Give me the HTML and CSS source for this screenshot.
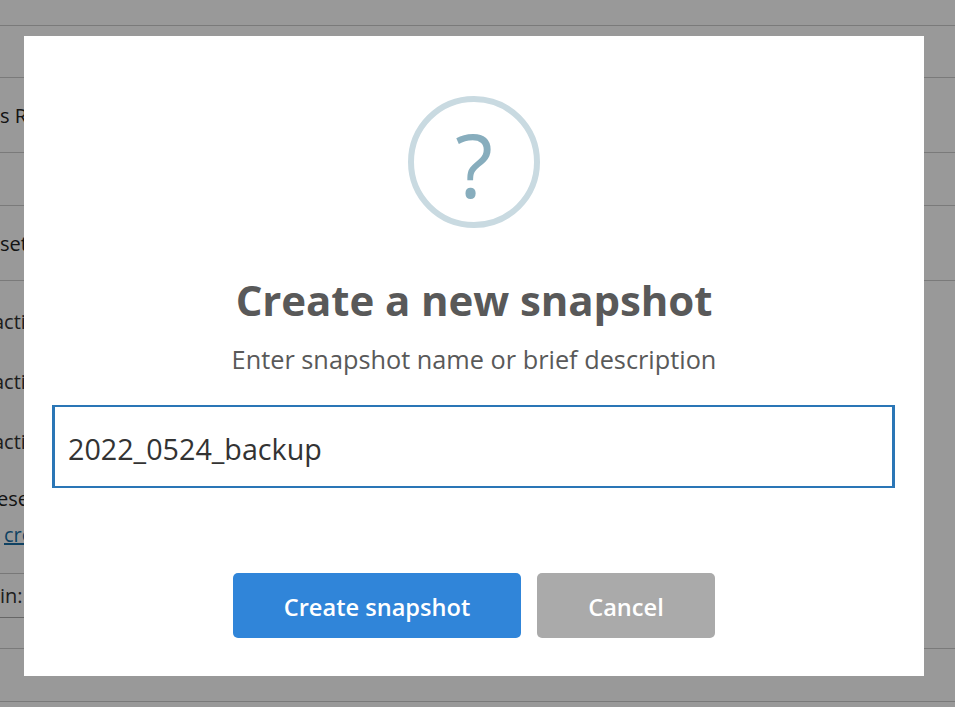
FILE: index.html
```html
<!DOCTYPE html>
<html lang="en">
<head>
<meta charset="utf-8">
<title>Create a new snapshot</title>
<link rel="stylesheet" href="styles.css">
</head>
<body>
<main class="page">
  <div class="row h25"></div>
  <div class="row h52"></div>
  <div class="row h75 text-row"><span class="strong">s R</span></div>
  <div class="row h53"></div>
  <div class="row h75 text-row"><span class="strong">set</span></div>
  <div class="plain">
    <p class="item i1">acti</p>
    <p class="item i2">acti</p>
    <p class="item i3">acti</p>
    <p class="item i4 strong">eset</p>
    <p class="item i5"><a href="#" class="link">cre</a></p>
  </div>
  <div class="row h44 text-row short"><span>in:</span></div>
  <div class="row h31"></div>
  <div class="row h53"></div>
</main>
<div class="overlay">
  <section class="modal">
    <div class="icon">?</div>
    <h1 class="title">Create a new snapshot</h1>
    <p class="subtitle">Enter snapshot name or brief description</p>
    <input class="name" type="text" value="2022_0524_backup">
    <div class="actions">
      <button class="btn confirm" type="button">Create snapshot</button>
      <button class="btn cancel" type="button">Cancel</button>
    </div>
  </section>
</div>
</body>
</html>
```
FILE: styles.css
```css
* { box-sizing: border-box; }
html, body { margin: 0; height: 100%; overflow: hidden; }
body { background: #fff; color: #333; font-family: "Open Sans", "Noto Sans", sans-serif; font-size: 20px; }

.page { display: flex; flex-direction: column; height: 707px; }
.row { border-bottom: 1px solid #ccc; flex: none; }
.h25 { height: 26px; }
.h52 { height: 52px; }
.h75 { height: 75px; }
.h53 { height: 53px; }
.h44 { height: 44px; }
.h31 { height: 31px; }
.text-row { display: flex; align-items: center; }
.strong { color: #222; }
.plain { height: 293px; width: 500px; flex: none; border-bottom: 1px solid #c8c8c8; }
.short { width: 500px; white-space: nowrap; border-bottom-color: #aaa; }
.item { margin: 0; white-space: nowrap; line-height: 24px; }
.i1 { padding-top: 29px; text-indent: -7px; }
.i2 { padding-top: 36px; text-indent: -7px; }
.i3 { padding-top: 36px; text-indent: -7px; }
.i4 { padding-top: 33px; text-indent: -3px; }
.i5 { padding-top: 12px; padding-left: 4px; }
.link { color: #1a6fa5; }

.overlay {
  position: fixed;
  inset: 0;
  background: rgba(0, 0, 0, 0.4);
}
.modal {
  position: absolute;
  left: 24px;
  top: 36px;
  width: 900px;
  height: 640px;
  background: #fff;
  display: flex;
  flex-direction: column;
  align-items: center;
  padding: 60px 28px 0;
  color: #595959;
}
.icon {
  width: 132px;
  height: 132px;
  border: 6px solid #c9dae1;
  border-radius: 50%;
  color: #87adbd;
  font-size: 88px;
  font-weight: 500;
  line-height: 124px;
  text-align: center;
  flex: none;
}
.title {
  margin: 43px 0 0;
  font-size: 42px;
  line-height: 58px;
  font-weight: 700;
  letter-spacing: -0.1px;
  color: #595959;
}
.subtitle {
  margin: 14px 0 0;
  font-size: 25.3px;
  line-height: 32px;
}
.name {
  display: block;
  align-self: flex-start;
  width: 843px;
  height: 83px;
  margin: 30px 0 0;
  padding: 3px 13px 0;
  border: solid #2a76b6;
  border-width: 2px 3px;
  outline: none;
  font: inherit;
  font-size: 28.7px;
  color: #333;
  background: #fff;
}
.actions { display: flex; gap: 16px; margin-top: 85px; }
.btn {
  height: 65px;
  padding: 2px 0 0;
  border: 0;
  border-radius: 5px;
  color: #fff;
  font: inherit;
  font-size: 23.6px;
  font-weight: 600;
}
.confirm { width: 288px; background: #3085d9; }
.cancel { width: 178px; background: #aaa; }
```
